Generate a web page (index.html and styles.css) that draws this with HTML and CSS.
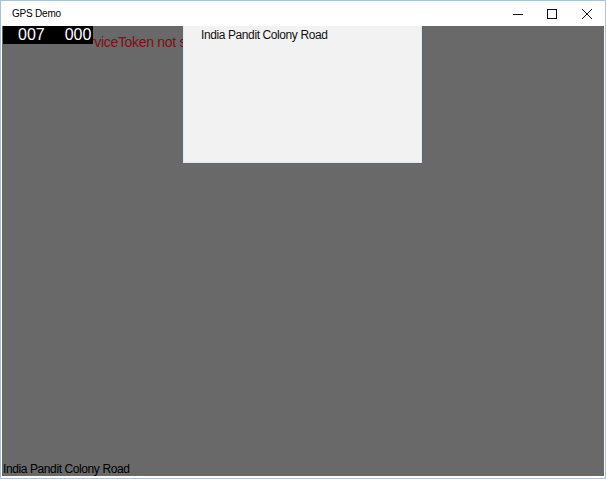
FILE: index.html
```html
<!DOCTYPE html>
<html lang="en">
  <head>
    <meta charset="UTF-8" />
    <meta name="viewport" content="width=device-width, initial-scale=1.0" />
    <title>GPS Demo</title>
    <link rel="stylesheet" href="styles.css">
  </head>
  <body>
    <div class="window">
      <div class="title-bar">
        <span class="title">GPS Demo</span>
        <div class="controls">
          <span class="ctl">
            <svg width="10" height="10" viewBox="0 0 10 10"><path d="M0 5.5h10" stroke="#111" stroke-width="1"/></svg>
          </span>
          <span class="ctl">
            <svg width="10" height="10" viewBox="0 0 10 10"><rect x="0.5" y="0.5" width="9" height="9" fill="none" stroke="#111" stroke-width="1"/></svg>
          </span>
          <span class="ctl">
            <svg width="10" height="10" viewBox="0 0 10 10"><path d="M0 0L10 10M10 0L0 10" stroke="#111" stroke-width="1"/></svg>
          </span>
        </div>
      </div>
      <div class="content">
        <div class="warning-strip">
          <span class="token-warning">MapServiceToken not specified.</span>
        </div>
        <div class="counter">
          <span>007</span>
          <span>000</span>
        </div>
        <div class="flyout">
          <span class="flyout-text">India Pandit Colony Road</span>
        </div>
        <div class="address">India Pandit Colony Road</div>
      </div>
    </div>
  </body>
</html>
```

FILE: styles.css
```css
body {
  margin: 0;
  background: #ffffff;
  font-family: "Segoe UI", "Liberation Sans", Arial, sans-serif;
}
.window {
  width: 604px;
  height: 477px;
  border: 1px solid #a9c2dc;
  display: flex;
  flex-direction: column;
  background: #ffffff;
}
.title-bar {
  height: 25px;
  display: flex;
  align-items: center;
  justify-content: space-between;
  padding-left: 11px;
}
.title {
  font-size: 10px;
  letter-spacing: -0.2px;
  color: #000;
}
.controls {
  display: flex;
  height: 100%;
}
.ctl {
  width: 34px;
  height: 100%;
  display: flex;
  align-items: center;
  justify-content: center;
}
.ctl:last-child {
  width: 36px;
}
.content {
  position: relative;
  flex: 1;
  margin: 0 1px 2px 1px;
  background: #696969;
  display: flex;
  flex-direction: column;
  overflow: hidden;
}
/* the warning is clipped on the left by its strip */
.warning-strip {
  position: absolute;
  left: 91px;
  top: 8px;
  width: 100px;
  height: 17px;
  overflow: hidden;
}
.token-warning {
  display: block;
  margin-left: -46px;
  font-size: 14px;
  line-height: 17px;
  letter-spacing: -0.3px;
  color: #800e14;
  white-space: nowrap;
}
.counter {
  position: absolute;
  left: 1px;
  top: 0;
  width: 90px;
  height: 18px;
  background: #000;
  color: #fff;
  font-size: 16px;
  line-height: 17px;
  display: flex;
  gap: 20px;
  padding-left: 15px;
  box-sizing: border-box;
}
.flyout {
  position: absolute;
  left: 181px;
  top: 0;
  width: 237px;
  height: 136px;
  background: #f2f2f2;
  border: 1px solid #dfeaf6;
  border-top: none;
  box-shadow: 1px 1px 0 #5e6670;
}
.flyout-text {
  display: block;
  padding: 2px 0 0 17px;
  font-size: 12px;
  letter-spacing: -0.4px;
  color: #111;
}
.address {
  margin-top: auto;
  padding-left: 1px;
  font-size: 12px;
  line-height: 14px;
  letter-spacing: -0.4px;
  color: #000;
}
```
